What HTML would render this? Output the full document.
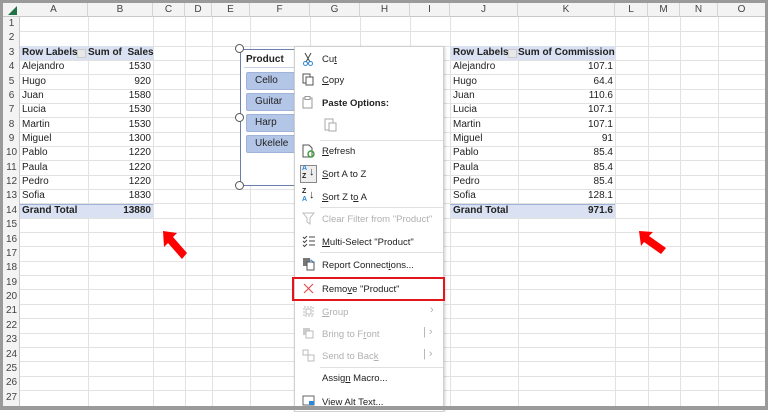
<!DOCTYPE html>
<html><head><meta charset="utf-8"><style>
*{margin:0;padding:0;box-sizing:border-box}
body{width:768px;height:410px;overflow:hidden;background:#fff;font-family:"Liberation Sans",sans-serif;font-size:10px;color:#222;position:relative}
.a{position:absolute}
.hl{position:absolute;left:20px;right:3px;height:1px;background:#e2e2e2}
.vl{position:absolute;top:17px;bottom:4px;width:1px;background:#e2e2e2}
.ch{position:absolute;top:3px;height:14px;text-align:center;line-height:14px;color:#444;font-size:10px;border-right:1px solid #d4d4d4}
.rh{position:absolute;left:3px;width:17px;text-align:center;color:#444;height:14.37px;line-height:14.37px;font-size:10px}
.c{position:absolute;height:14.37px;line-height:14.37px;white-space:nowrap}
.r{text-align:right}
.b{font-weight:bold}
.hd{background:#d9e1f2}
.mi{position:absolute;left:322px;font-size:9.5px;color:#222}
.dis{color:#b0b0b0}
.sep{position:absolute;left:320px;width:123px;height:1px;background:#e0e0e0}
.btn{position:absolute;left:246px;width:52px;height:18px;background:#b4c6e7;border:1px solid #9fb3d8;border-radius:2px;line-height:16px;padding-left:8px;font-size:10px}
</style></head><body>
<div class="a" style="left:0;top:0;width:768px;height:410px;border:3px solid #9a9a9a;border-bottom-width:4px;z-index:50;pointer-events:none"></div>
<div class="a" style="left:3px;top:3px;width:762px;height:14px;background:#f3f3f3;border-bottom:1px solid #c8c8c8"></div>
<div class="a" style="left:3px;top:17px;width:17px;height:389px;background:#f3f3f3;border-right:1px solid #c8c8c8"></div>
<svg class="a" style="left:6px;top:5px" width="12" height="11"><polygon points="11,1 11,10 2,10" fill="#217346"/></svg>
<div class="ch" style="left:20px;width:68px">A</div>
<div class="ch" style="left:88px;width:65px">B</div>
<div class="ch" style="left:153px;width:32px">C</div>
<div class="ch" style="left:185px;width:27px">D</div>
<div class="ch" style="left:212px;width:38px">E</div>
<div class="ch" style="left:250px;width:60px">F</div>
<div class="ch" style="left:310px;width:50px">G</div>
<div class="ch" style="left:360px;width:50px">H</div>
<div class="ch" style="left:410px;width:40px">I</div>
<div class="ch" style="left:450px;width:68px">J</div>
<div class="ch" style="left:518px;width:97px">K</div>
<div class="ch" style="left:615px;width:33px">L</div>
<div class="ch" style="left:648px;width:32px">M</div>
<div class="ch" style="left:680px;width:38px">N</div>
<div class="ch" style="left:718px;width:47px;border-right:none">O</div>
<div class="vl" style="left:88px"></div><div class="vl" style="left:153px"></div><div class="vl" style="left:185px"></div><div class="vl" style="left:212px"></div><div class="vl" style="left:250px"></div><div class="vl" style="left:310px"></div><div class="vl" style="left:360px"></div><div class="vl" style="left:410px"></div><div class="vl" style="left:450px"></div><div class="vl" style="left:518px"></div><div class="vl" style="left:615px"></div><div class="vl" style="left:648px"></div><div class="vl" style="left:680px"></div><div class="vl" style="left:718px"></div>
<div class="hl" style="top:31px"></div><div class="hl" style="top:46px"></div><div class="hl" style="top:60px"></div><div class="hl" style="top:74px"></div><div class="hl" style="top:89px"></div><div class="hl" style="top:103px"></div><div class="hl" style="top:117px"></div><div class="hl" style="top:132px"></div><div class="hl" style="top:146px"></div><div class="hl" style="top:160px"></div><div class="hl" style="top:175px"></div><div class="hl" style="top:189px"></div><div class="hl" style="top:203px"></div><div class="hl" style="top:218px"></div><div class="hl" style="top:232px"></div><div class="hl" style="top:246px"></div><div class="hl" style="top:261px"></div><div class="hl" style="top:275px"></div><div class="hl" style="top:289px"></div><div class="hl" style="top:304px"></div><div class="hl" style="top:318px"></div><div class="hl" style="top:333px"></div><div class="hl" style="top:347px"></div><div class="hl" style="top:361px"></div><div class="hl" style="top:376px"></div><div class="hl" style="top:390px"></div>
<div class="rh" style="top:17px">1</div><div class="rh" style="top:31.4px">2</div><div class="rh" style="top:45.7px">3</div><div class="rh" style="top:60.1px">4</div><div class="rh" style="top:74.5px">5</div><div class="rh" style="top:88.9px">6</div><div class="rh" style="top:103.2px">7</div><div class="rh" style="top:117.6px">8</div><div class="rh" style="top:132px">9</div><div class="rh" style="top:146.3px">10</div><div class="rh" style="top:160.7px">11</div><div class="rh" style="top:175.1px">12</div><div class="rh" style="top:189.4px">13</div><div class="rh" style="top:203.8px">14</div><div class="rh" style="top:218.2px">15</div><div class="rh" style="top:232.6px">16</div><div class="rh" style="top:246.9px">17</div><div class="rh" style="top:261.3px">18</div><div class="rh" style="top:275.7px">19</div><div class="rh" style="top:290px">20</div><div class="rh" style="top:304.4px">21</div><div class="rh" style="top:318.8px">22</div><div class="rh" style="top:333.1px">23</div><div class="rh" style="top:347.5px">24</div><div class="rh" style="top:361.9px">25</div><div class="rh" style="top:376.3px">26</div><div class="rh" style="top:390.6px">27</div>
<div class="a hd" style="left:20px;top:46px;width:133px;height:14px"></div>
<div class="a hd" style="left:20px;top:204px;width:133px;height:14px;border-top:1px solid #9fb3d8"></div>
<div class="c b" style="left:22px;top:45.7px">Row Labels</div>
<div class="a" style="left:77px;top:49px;width:9px;height:9px;background:#e8e8e8;border:1px solid #ccc"></div>
<div class="c b r" style="left:88px;top:45.7px;width:63px">Sum of &nbsp;Sales</div>
<div class="c" style="left:22px;top:60.1px">Alejandro</div><div class="c r" style="left:88px;top:60.1px;width:63px">1530</div>
<div class="c" style="left:22px;top:74.5px">Hugo</div><div class="c r" style="left:88px;top:74.5px;width:63px">920</div>
<div class="c" style="left:22px;top:88.9px">Juan</div><div class="c r" style="left:88px;top:88.9px;width:63px">1580</div>
<div class="c" style="left:22px;top:103.2px">Lucia</div><div class="c r" style="left:88px;top:103.2px;width:63px">1530</div>
<div class="c" style="left:22px;top:117.6px">Martin</div><div class="c r" style="left:88px;top:117.6px;width:63px">1530</div>
<div class="c" style="left:22px;top:132px">Miguel</div><div class="c r" style="left:88px;top:132px;width:63px">1300</div>
<div class="c" style="left:22px;top:146.3px">Pablo</div><div class="c r" style="left:88px;top:146.3px;width:63px">1220</div>
<div class="c" style="left:22px;top:160.7px">Paula</div><div class="c r" style="left:88px;top:160.7px;width:63px">1220</div>
<div class="c" style="left:22px;top:175.1px">Pedro</div><div class="c r" style="left:88px;top:175.1px;width:63px">1220</div>
<div class="c" style="left:22px;top:189.4px">Sofia</div><div class="c r" style="left:88px;top:189.4px;width:63px">1830</div>
<div class="c b" style="left:22px;top:203.8px">Grand Total</div><div class="c b r" style="left:88px;top:203.8px;width:63px">13880</div>
<div class="a hd" style="left:450px;top:46px;width:165px;height:14px"></div>
<div class="a hd" style="left:450px;top:204px;width:165px;height:14px;border-top:1px solid #9fb3d8"></div>
<div class="c b" style="left:453px;top:45.7px">Row Labels</div>
<div class="a" style="left:508px;top:49px;width:9px;height:9px;background:#e8e8e8;border:1px solid #ccc"></div>
<div class="c b r" style="left:518px;top:45.7px;width:95px">Sum of Commission</div>
<div class="c" style="left:453px;top:60.1px">Alejandro</div><div class="c r" style="left:518px;top:60.1px;width:95px">107.1</div>
<div class="c" style="left:453px;top:74.5px">Hugo</div><div class="c r" style="left:518px;top:74.5px;width:95px">64.4</div>
<div class="c" style="left:453px;top:88.9px">Juan</div><div class="c r" style="left:518px;top:88.9px;width:95px">110.6</div>
<div class="c" style="left:453px;top:103.2px">Lucia</div><div class="c r" style="left:518px;top:103.2px;width:95px">107.1</div>
<div class="c" style="left:453px;top:117.6px">Martin</div><div class="c r" style="left:518px;top:117.6px;width:95px">107.1</div>
<div class="c" style="left:453px;top:132px">Miguel</div><div class="c r" style="left:518px;top:132px;width:95px">91</div>
<div class="c" style="left:453px;top:146.3px">Pablo</div><div class="c r" style="left:518px;top:146.3px;width:95px">85.4</div>
<div class="c" style="left:453px;top:160.7px">Paula</div><div class="c r" style="left:518px;top:160.7px;width:95px">85.4</div>
<div class="c" style="left:453px;top:175.1px">Pedro</div><div class="c r" style="left:518px;top:175.1px;width:95px">85.4</div>
<div class="c" style="left:453px;top:189.4px">Sofia</div><div class="c r" style="left:518px;top:189.4px;width:95px">128.1</div>
<div class="c b" style="left:453px;top:203.8px">Grand Total</div><div class="c b r" style="left:518px;top:203.8px;width:95px">971.6</div>
<div class="a" style="left:240px;top:49px;width:70px;height:137px;background:#fff;border:1px solid #6b7fa8"></div>
<div class="a b" style="left:246px;top:54px;font-size:10px">Product</div>
<div class="a" style="left:244px;top:67px;width:60px;height:1px;background:#c6d3ea"></div>
<div class="btn" style="top:72px">Cello</div>
<div class="btn" style="top:93px">Guitar</div>
<div class="btn" style="top:114px">Harp</div>
<div class="btn" style="top:135px">Ukelele</div>
<div class="a" style="left:235px;top:44px;width:9px;height:9px;border-radius:50%;background:#fff;border:1.2px solid #555"></div>
<div class="a" style="left:235px;top:113px;width:9px;height:9px;border-radius:50%;background:#fff;border:1.2px solid #555"></div>
<div class="a" style="left:235px;top:181px;width:9px;height:9px;border-radius:50%;background:#fff;border:1.2px solid #555"></div>
<div class="a" style="left:294px;top:46px;width:150px;height:366px;background:#fff;border:1px solid #d0d0d0;box-shadow:1px 1px 3px rgba(0,0,0,.2)"></div>
<svg class="a" style="left:302px;top:52px" width="12" height="14"><path d="M3 1L8 10M9 1L4 10" stroke="#444" stroke-width="1"/><circle cx="3.5" cy="11.5" r="2" fill="none" stroke="#2b88d8"/><circle cx="8.5" cy="11.5" r="2" fill="none" stroke="#2b88d8"/></svg>
<div class="mi" style="top:54px">Cu<u>t</u></div>
<svg class="a" style="left:302px;top:73px" width="13" height="13"><rect x="1" y="1" width="7" height="9" fill="#fff" stroke="#555"/><rect x="4" y="4" width="7" height="8" fill="#fff" stroke="#555"/></svg>
<div class="mi" style="top:75px"><u>C</u>opy</div>
<svg class="a" style="left:302px;top:96px" width="13" height="13"><rect x="1" y="2" width="9" height="10" fill="#fff" stroke="#999"/><rect x="3" y="0.5" width="5" height="3" fill="#fff" stroke="#999"/></svg>
<div class="mi b" style="top:98px">Paste Options:</div>
<svg class="a" style="left:324px;top:117px" width="13" height="15"><rect x="1" y="2" width="8" height="11" fill="#fff" stroke="#aaa"/><rect x="5" y="6" width="7" height="8" fill="#fff" stroke="#aaa"/></svg>
<div class="sep" style="top:140px"></div>
<svg class="a" style="left:302px;top:144px" width="13" height="14"><path d="M1 1h6l3 3v9H1z" fill="#fff" stroke="#555"/><circle cx="9" cy="10" r="3" fill="none" stroke="#3a9c3a" stroke-width="1.4"/></svg>
<div class="mi" style="top:146px"><u>R</u>efresh</div>
<div class="a" style="left:300px;top:165px;width:17px;height:18px;border:1px solid #888;background:#eee"></div>
<div class="a" style="left:302px;top:165px;font-size:7px;line-height:8px;font-weight:bold"><span style="color:#2b88d8">A</span><br>Z</div>
<div class="a" style="left:309px;top:166px;font-size:11px">↓</div>
<div class="mi" style="top:169px"><u>S</u>ort A to Z</div>
<div class="a" style="left:302px;top:188px;font-size:7px;line-height:8px;font-weight:bold">Z<br><span style="color:#2b88d8">A</span></div>
<div class="a" style="left:309px;top:189px;font-size:11px">↓</div>
<div class="mi" style="top:192px"><u>S</u>ort Z t<u>o</u> A</div>
<div class="sep" style="top:207px"></div>
<svg class="a" style="left:302px;top:212px" width="13" height="13"><path d="M1 1h11l-4 5v6l-3-2V6z" fill="none" stroke="#bbb"/></svg>
<div class="mi dis" style="top:214px">Clear Filter from "Product"</div>
<svg class="a" style="left:302px;top:235px" width="13" height="13"><path d="M1 2l1.5 1.5L5 1M1 6l1.5 1.5L5 5M1 10l1.5 1.5L5 9M7 2h6M7 6h6M7 10h6" stroke="#444" fill="none"/></svg>
<div class="mi" style="top:237px"><u>M</u>ulti-Select "Product"</div>
<div class="sep" style="top:252px"></div>
<svg class="a" style="left:302px;top:257px" width="13" height="14"><rect x="1" y="1" width="7" height="8" fill="#777"/><rect x="5" y="5" width="7" height="8" fill="#fff" stroke="#555"/><path d="M8 3a3 3 0 0 1 3 3" stroke="#2b88d8" fill="none"/></svg>
<div class="mi" style="top:260px">Report Connect<u>i</u>ons...</div>
<div class="a" style="left:292px;top:277px;width:153px;height:24px;border:2px solid #e3161c"></div>
<svg class="a" style="left:303px;top:283px" width="11" height="11"><path d="M1 1L10 10M10 1L1 10" stroke="#e05050" stroke-width="1.2"/></svg>
<div class="mi" style="top:284px">Remo<u>v</u>e "Product"</div>
<svg class="a" style="left:302px;top:305px" width="13" height="13"><rect x="2" y="2" width="9" height="9" fill="none" stroke="#bbb" stroke-dasharray="2 1"/><rect x="4" y="4" width="5" height="5" fill="none" stroke="#bbb"/></svg>
<div class="mi dis" style="top:307px"><u>G</u>roup</div><div class="a dis" style="left:430px;top:304px;font-size:11px">›</div>
<svg class="a" style="left:302px;top:327px" width="13" height="13"><rect x="1" y="1" width="7" height="7" fill="#ccc"/><rect x="4" y="4" width="7" height="7" fill="#fff" stroke="#bbb"/></svg>
<div class="mi dis" style="top:329px">Bring to F<u>r</u>ont</div><div class="a dis" style="left:423px;top:326px;font-size:11px">| ›</div>
<svg class="a" style="left:302px;top:349px" width="13" height="13"><rect x="1" y="1" width="5" height="5" fill="#fff" stroke="#bbb"/><rect x="6" y="6" width="6" height="6" fill="#fff" stroke="#bbb"/></svg>
<div class="mi dis" style="top:351px">Send to Bac<u>k</u></div><div class="a dis" style="left:423px;top:348px;font-size:11px">| ›</div>
<div class="sep" style="top:367px"></div>
<div class="mi" style="top:373px">Assig<u>n</u> Macro...</div>
<svg class="a" style="left:302px;top:395px" width="13" height="12"><rect x="1" y="1" width="11" height="9" fill="#fff" stroke="#666"/><rect x="7" y="6" width="5" height="4" fill="#2b88d8"/></svg>
<div class="mi" style="top:397px">View <u>A</u>lt Text...</div>
<svg class="a" style="left:160px;top:228px" width="32" height="36"><polygon points="3,3 17,5 13,9 27,25 22,31 8,15 4,19" fill="#f00"/></svg>
<svg class="a" style="left:636px;top:228px" width="36" height="34"><polygon points="3,3 17,4 13,8 30,20 25,26 8,14 5,18" fill="#f00"/></svg>
</body></html>
